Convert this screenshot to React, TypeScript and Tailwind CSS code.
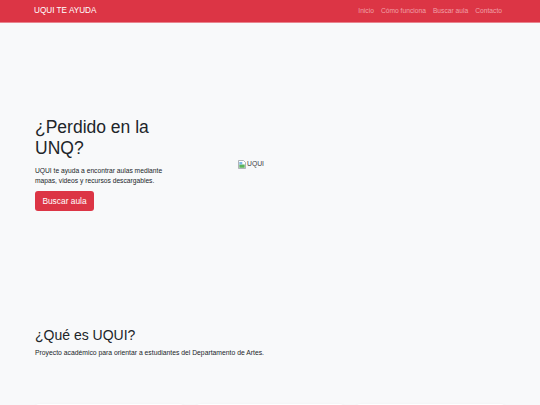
import React from "react";

const navLinks = ["Inicio", "Cómo funciona", "Buscar aula", "Contacto"];

function BrokenImage() {
  return (
    <svg width="8" height="9" viewBox="0 0 8 9" className="shrink-0">
      <path d="M0.5 0.5h5l2 2v6h-7z" fill="#fff" stroke="#9aa0a6" strokeWidth="0.8" />
      <rect x="1.3" y="4.5" width="5.4" height="3.3" fill="#5bb35b" />
      <rect x="1.3" y="2" width="3" height="2.5" fill="#7fb8e6" />
    </svg>
  );
}

export default function App() {
  return (
    <div
      className="min-h-screen bg-[#f8f9fa] text-[#212529]"
      style={{ fontFamily: '"Liberation Sans", Arial, sans-serif' }}
    >
      {/* Navbar */}
      <nav className="h-[23px] bg-[#dc3545] border-b border-[#e9848e] flex items-center justify-between pl-[34px] pr-[38px]">
        <span className="text-white text-[8.2px] leading-none">UQUI TE AYUDA</span>
        <ul className="flex items-center gap-[7px] text-[6.7px] leading-none text-[#f0a1a8]">
          {navLinks.map((l) => (
            <li key={l}>{l}</li>
          ))}
        </ul>
      </nav>

      {/* Hero */}
      <section className="h-[282px] flex items-center px-[35px]">
        <div className="w-[145px]">
          <h1 className="text-[17.5px] leading-[1.2] mb-[7px]">¿Perdido en la UNQ?</h1>
          <p className="text-[6.7px] leading-[10px] mb-[1px]">
            UQUI te ayuda a encontrar aulas mediante mapas, videos y recursos descargables.
          </p>
          <button className="bg-[#dc3545] text-white text-[8.4px] rounded-[3px] w-[59px] h-[20px]">
            Buscar aula
          </button>
        </div>
        <div className="ml-[58px] flex items-center gap-[1px] text-[6.8px] text-[#3c4043]">
          <BrokenImage />
          <span>UQUI</span>
        </div>
      </section>

      {/* Qué es */}
      <section className="px-[35px] pt-[22px]">
        <h2 className="text-[14px] leading-[1.2] mb-[4px]">¿Qué es UQUI?</h2>
        <p className="text-[6.8px] leading-[10px]">
          Proyecto académico para orientar a estudiantes del Departamento de Artes.
        </p>
        <div className="grid grid-cols-3 gap-[12px] mt-[46px]">
          {[0, 1, 2].map((i) => (
            <div key={i} className="h-[90px] bg-white rounded-[4px] shadow-sm" />
          ))}
        </div>
      </section>
    </div>
  );
}
